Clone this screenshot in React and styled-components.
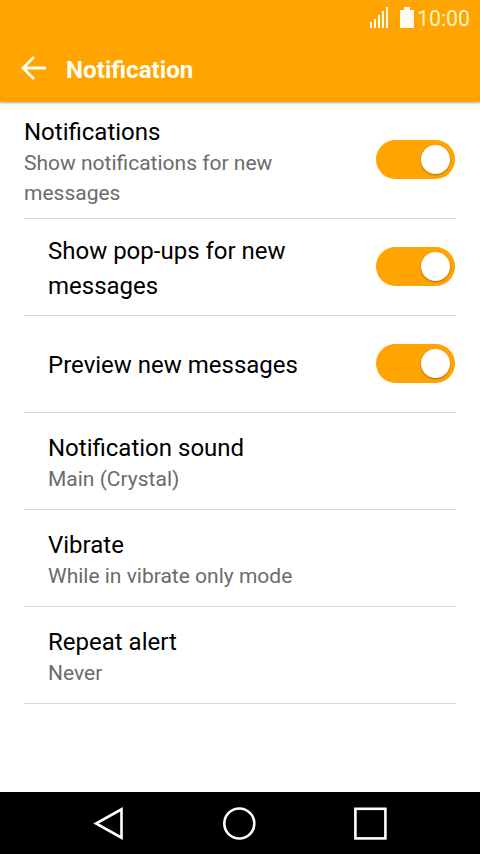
import React, {useState} from "react";
import styled, {createGlobalStyle} from "styled-components";

const mainColor = '#ffa400';

const GlobalStyle = createGlobalStyle`
  * {
    box-sizing: border-box;
  }
  body {
    margin: 0;
    background: #fff;
    font-family: Roboto, "Liberation Sans", sans-serif;
  }
`

const Screen = styled('div')`
  display: flex;
  flex-direction: column;
  width: 480px;
  height: 854px;
  overflow: hidden;
  background: #fff;
`
const Header = styled('header')`
  flex: none;
  height: 102px;
  background: ${mainColor};
  color: #fffdf0;
  box-shadow: 0 1px 2px rgba(0, 0, 0, 0.35);
`
const StatusBar = styled('div')`
  display: flex;
  justify-content: flex-end;
  height: 37px;
  padding-right: 10px;
`
const Clock = styled('span')`
  width: 53px;
  margin-left: 3px;
  font-size: 21.3px;
  line-height: 38px;
  text-align: right;
  color: #fff6c8;
`
const TitleBar = styled('div')`
  display: flex;
  align-items: center;
  height: 65px;
  padding-left: 20px;
`
const BackButton = styled('button')`
  display: flex;
  padding: 0;
  margin: 0 19px 3px 0;
  border: none;
  background: none;
  color: inherit;
`
const PageTitle = styled('h1')`
  margin: 0;
  font-size: 24.2px;
  font-weight: 700;
  line-height: 32px;
`
const SettingsList = styled('main')`
  flex: 1;
  padding: 0 24px;
`
const Row = styled('div')`
  display: flex;
  align-items: center;
  justify-content: space-between;
  height: ${props => props.$tall ? '117px' : '97px'};
  padding: 2px 1px 0 ${props => props.$nested ? '24px' : '0'};
  border-bottom: 1px solid #d9d9d9;
`
const RowText = styled('div')`
  width: ${props => props.$narrow ? '290px' : 'auto'};
`
const RowTitle = styled('div')`
  padding-top: 1px;
  font-size: 24px;
  line-height: 35px;
  color: #000;
`
const RowSummary = styled('div')`
  margin-top: -2px;
  font-size: 21px;
  line-height: 30px;
  color: #6b6b6b;
`
const Track = styled('button')`
  display: flex;
  align-items: center;
  flex: none;
  justify-content: ${props => props.$on ? 'flex-end' : 'flex-start'};
  width: 79.5px;
  height: 39px;
  margin-bottom: 3px;
  padding: 0 5px;
  border: none;
  border-radius: 20px;
  background: ${props => props.$on ? mainColor : '#bdbdbd'};
`
const Thumb = styled('span')`
  width: 29px;
  height: 29px;
  border-radius: 50%;
  background: #fff;
  box-shadow: 0 1px 2px rgba(100, 50, 0, 0.5);
`
const NavBar = styled('nav')`
  flex: none;
  height: 62px;
  background: #000;
`

const rows = [
  {title: 'Notifications', summary: 'Show notifications for new messages', toggle: true, tall: true},
  {title: 'Show pop-ups for new messages', toggle: true, nested: true},
  {title: 'Preview new messages', toggle: true, nested: true},
  {title: 'Notification sound', summary: 'Main (Crystal)', nested: true},
  {title: 'Vibrate', summary: 'While in vibrate only mode', nested: true},
  {title: 'Repeat alert', summary: 'Never', nested: true},
]

const StatusIcons = () => (
  <svg width="46" height="37" viewBox="0 0 46 37" fill="#fffdf0">
    <path d="M2 22h2v6h-2zM6 19h2v9h-2zM10 15h2v13h-2zM14 11h2v17h-2zM18 7h2v21h-2z" />
    <path d="M36 7h6v3h4v18H32V10h4z" />
  </svg>
)

const BackArrow = () => (
  <svg width="27" height="26" viewBox="0 0 27 26" fill="none" stroke="currentColor" strokeWidth="2.8">
    <path d="M26 13H3M14 2L3 13L14 24" />
  </svg>
)

const NavIcons = () => (
  <svg width="480" height="62" viewBox="0 0 480 62" fill="none" stroke="#fff" strokeWidth="2.6">
    <path d="M121.5 17.3V45.7L96 31.5z" />
    <circle cx="239.3" cy="31.5" r="15" />
    <rect x="355.4" y="16.8" width="30" height="29.6" />
  </svg>
)

const Switch = ({label}) => {
  const [on, setOn] = useState(true);

  return (
    <Track $on={on} role="switch" aria-checked={on} aria-label={label} onClick={() => setOn(!on)}>
      <Thumb />
    </Track>
  )
}

const App = () => {
  return (
    <>
      <GlobalStyle />
      <Screen>
        <Header>
          <StatusBar>
            <StatusIcons />
            <Clock>10:00</Clock>
          </StatusBar>
          <TitleBar>
            <BackButton aria-label="Back"><BackArrow /></BackButton>
            <PageTitle>Notification</PageTitle>
          </TitleBar>
        </Header>
        <SettingsList>
          {
            rows.map((row, index) => (
              <Row key={index} $tall={row.tall} $nested={row.nested}>
                <RowText $narrow={row.toggle}>
                  <RowTitle>{row.title}</RowTitle>
                  {row.summary && <RowSummary>{row.summary}</RowSummary>}
                </RowText>
                {row.toggle && <Switch label={row.title} />}
              </Row>
            ))
          }
        </SettingsList>
        <NavBar>
          <NavIcons />
        </NavBar>
      </Screen>
    </>
  )
}

export default App
